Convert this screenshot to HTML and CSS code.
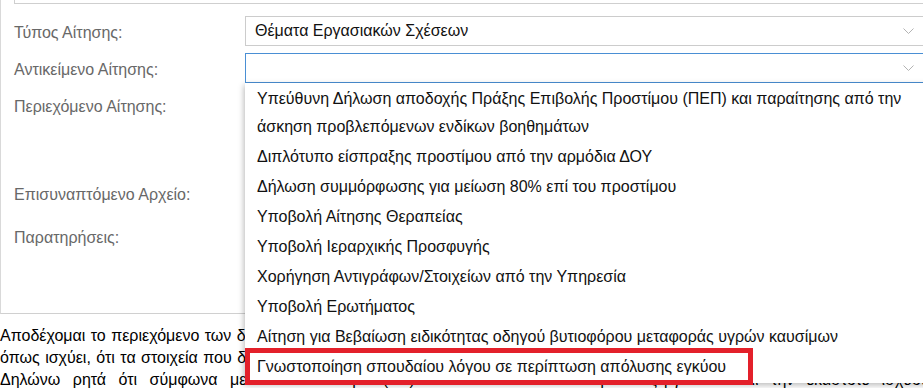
FILE: index.html
```html
<!DOCTYPE html>
<html lang="el">
<head>
<meta charset="utf-8">
<title>Αίτηση</title>
<link rel="stylesheet" href="styles.css">
</head>
<body>
<div class="page">
  <div class="panel">
    <div class="prev-field"></div>
    <div class="form">
      <div class="row row-select">
        <label class="lbl">Τύπος Αίτησης:</label>
        <div class="select">
          <span class="select-value">Θέματα Εργασιακών Σχέσεων</span>
          <svg class="chev" width="11" height="7" viewBox="0 0 11 7"><path d="M0.5 0.5 L5.5 5.5 L10.5 0.5" fill="none" stroke="#b3b3b3" stroke-width="1"/></svg>
        </div>
      </div>
      <div class="row row-select">
        <label class="lbl">Αντικείμενο Αίτησης:</label>
        <div class="select select-open">
          <span class="select-value"></span>
          <svg class="chev" width="11" height="7" viewBox="0 0 11 7"><path d="M0.5 0.5 L5.5 5.5 L10.5 0.5" fill="none" stroke="#b3b3b3" stroke-width="1"/></svg>
        </div>
      </div>
      <div class="row row-area">
        <label class="lbl">Περιεχόμενο Αίτησης:</label>
        <div class="field field-area"></div>
      </div>
      <div class="row row-file">
        <label class="lbl">Επισυναπτόμενο Αρχείο:</label>
        <div class="field field-file"></div>
      </div>
      <div class="row row-notes">
        <label class="lbl">Παρατηρήσεις:</label>
        <div class="field field-notes"></div>
      </div>
    </div>
  </div>

  <div class="terms">
    <div class="tl tl1">Αποδέχομαι το περιεχόμενο των δηλώσεων και των όρων χρήσης της ηλεκτρονικής υπηρεσίας υποβολής αιτήσεων</div>
    <div class="tl tl2">όπως ισχύει, ότι τα στοιχεία που δηλώνω είναι αληθή και ακριβή και ότι γνωρίζω τις κυρώσεις του νόμου</div>
    <div class="tl tl3">Δηλώνω ρητά ότι σύμφωνα με τον Κανονισμό (ΕΕ) 2016/679 συναινώ στην επεξεργασία κ αι την εκάστοτε ισχύουσα νομοθεσία</div>
  </div>

  <ul class="dropdown">
    <li class="opt">Υπεύθυνη Δήλωση αποδοχής Πράξης Επιβολής Προστίμου (ΠΕΠ) και παραίτησης από την<br>άσκηση προβλεπόμενων ενδίκων βοηθημάτων</li>
    <li class="opt">Διπλότυπο είσπραξης προστίμου από την αρμόδια ΔΟΥ</li>
    <li class="opt">Δήλωση συμμόρφωσης για μείωση 80% επί του προστίμου</li>
    <li class="opt">Υποβολή Αίτησης Θεραπείας</li>
    <li class="opt">Υποβολή Ιεραρχικής Προσφυγής</li>
    <li class="opt">Χορήγηση Αντιγράφων/Στοιχείων από την Υπηρεσία</li>
    <li class="opt">Υποβολή Ερωτήματος</li>
    <li class="opt">Αίτηση για Βεβαίωση ειδικότητας οδηγού βυτιοφόρου μεταφοράς υγρών καυσίμων</li>
    <li class="opt">Γνωστοποίηση σπουδαίου λόγου σε περίπτωση απόλυσης εγκύου</li>
  </ul>
  <div class="highlight"></div>
</div>
</body>
</html>
```

FILE: styles.css
```css
html, body {
  margin: 0;
  padding: 0;
  background: #fff;
  overflow: hidden;
}

body {
  font-family: "Liberation Sans", Arial, sans-serif;
  font-size: 16px;
  color: #000;
}

.page {
  position: relative;
  width: 1060px;
  height: 388px;
}

.panel {
  border-left: 1px solid #d9d9d9;
  border-bottom: 1px solid #d0d0d0;
  padding: 0 0 9px 13px;
}

.prev-field {
  height: 3px;
  border-left: 1px solid #cfcfcf;
  border-bottom: 1px solid #cfcfcf;
}

.form {
  margin-top: 12px;
  display: flex;
  flex-direction: column;
  gap: 7px;
}

.row {
  display: grid;
  grid-template-columns: 231px 1fr;
  align-items: start;
}

.lbl {
  color: #686868;
  font-size: 16px;
  padding-top: 4px;
  line-height: 26px;
}

.select {
  box-sizing: border-box;
  width: 690px;
  height: 30px;
  border: 1px solid #cccccc;
  display: flex;
  align-items: center;
  padding: 0 20px 0 9px;
  background: #fff;
}

.select-open {
  border-color: #4a8fd4;
}

.select-value {
  flex: 1;
  font-size: 16px;
  color: #111;
}

.chev {
  display: block;
  margin-top: 1px;
}

.field-area { height: 81px; }
.field-file { height: 36px; }
.field-notes { height: 83px; }

.terms {
  padding-top: 11px;
  font-size: 16px;
  line-height: 22px;
  color: #000;
}

.tl {
  white-space: nowrap;
}

.tl1 { word-spacing: 1px; }
.tl2 { word-spacing: 1px; }
.tl3 { word-spacing: 8px; }

.dropdown {
  position: absolute;
  left: 245px;
  top: 83px;
  width: 700px;
  height: 299px;
  margin: 0;
  padding: 1px 0 0 0;
  list-style: none;
  background: #fff;
  box-shadow: -1px 2px 6px rgba(0, 0, 0, 0.28);
}

.opt {
  padding: 1px 12px;
  line-height: 28px;
  white-space: nowrap;
  color: #111;
}

.highlight {
  position: absolute;
  left: 245px;
  top: 348px;
  width: 508px;
  height: 37px;
  box-sizing: border-box;
  border: 5px solid #e3202a;
}
```
